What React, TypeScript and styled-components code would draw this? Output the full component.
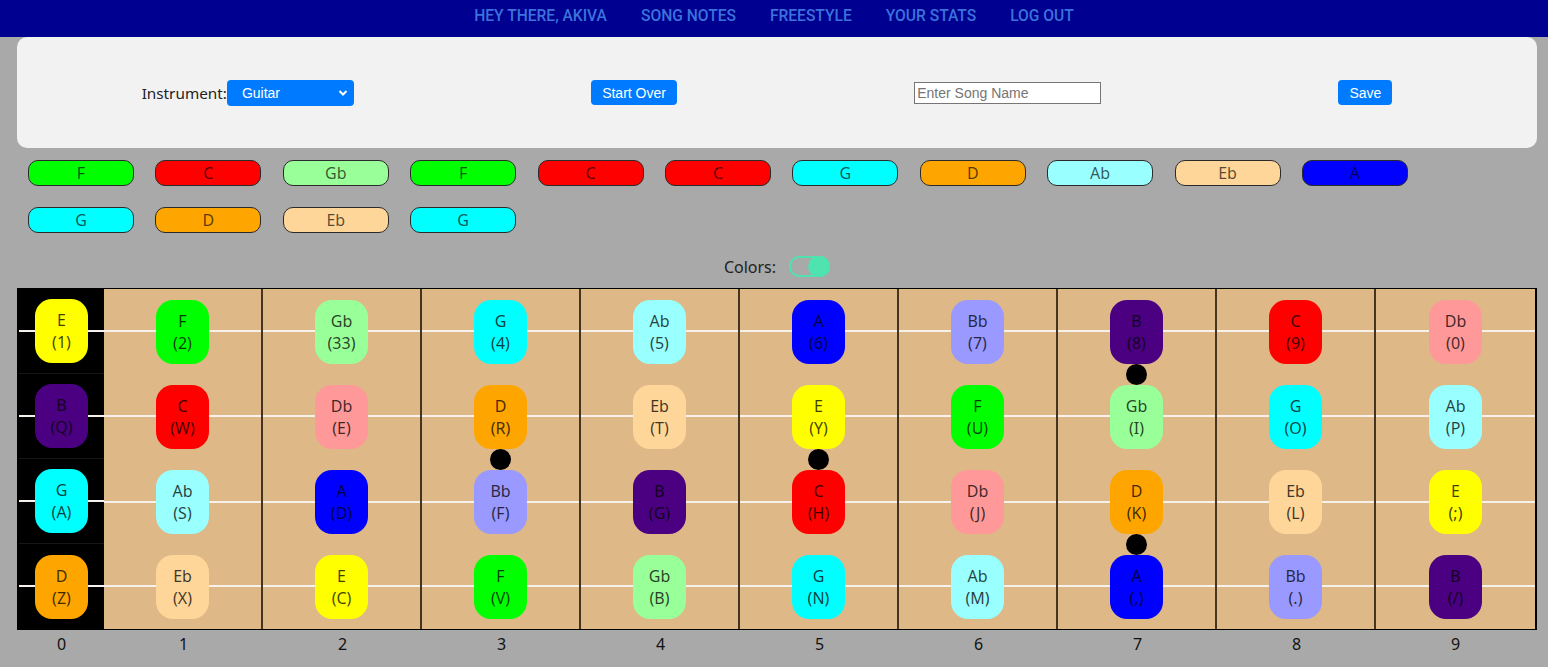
import React from "react";
import styled, { createGlobalStyle } from "styled-components";

const GlobalStyle = createGlobalStyle`
  html, body { margin: 0; padding: 0; }
  body {
    background: #a9a9a9;
    font-family: "Noto Sans", "Open Sans", sans-serif;
    color: #111;
  }
`;

const NOTE_COLORS: Record<string, string> = {
  E: "#ffff00",
  F: "#00ff00",
  Gb: "#99ff99",
  G: "#00ffff",
  Ab: "#99ffff",
  A: "#0000ff",
  Bb: "#9999ff",
  B: "#4b0082",
  C: "#ff0000",
  Db: "#ff9999",
  D: "#ffa500",
  Eb: "#ffd699",
};

const Nav = styled.nav`
  height: 37px;
  background: #000090;
  display: flex;
  justify-content: center;
  align-items: flex-start;
  padding-top: 5px;
  box-sizing: border-box;
`;

const NavLink = styled.a`
  font-family: Roboto, "Liberation Sans", sans-serif;
  font-weight: 500;
  font-size: 15.6px;
  line-height: 22px;
  color: #3b72dc;
  text-transform: uppercase;
  text-decoration: none;
  padding: 0 17px;
`;

const Page = styled.main`
  padding: 0 11px 0 17px;
`;

const Panel = styled.section`
  height: 111px;
  background: #f2f2f2;
  border-radius: 10px;
  display: flex;
  align-items: center;
  justify-content: space-around;
  padding: 0 26px 0 6px;
  box-sizing: border-box;
`;

const Field = styled.div`
  display: flex;
  align-items: center;
`;

const Label = styled.label`
  font-size: 15.3px;
  color: #222;
`;

const SelectWrap = styled.div`
  position: relative;
  display: flex;
`;

const Select = styled.select`
  appearance: none;
  width: 127px;
  height: 26px;
  background: #007bff;
  color: #fff;
  border: none;
  border-radius: 4px;
  font-family: "Liberation Sans", Arial, sans-serif;
  font-size: 14px;
  padding: 0 0 0 15px;
  outline: none;
`;

const Chevron = styled.svg`
  position: absolute;
  right: 6px;
  top: 9px;
  pointer-events: none;
`;

const Button = styled.button`
  height: 25px;
  background: #007bff;
  color: #fff;
  border: none;
  border-radius: 4px;
  font-family: "Liberation Sans", Arial, sans-serif;
  font-size: 14px;
  padding: 0 11px;
`;

const Input = styled.input`
  width: 187px;
  height: 22px;
  box-sizing: border-box;
  border: 1px solid #767676;
  background: #fff;
  font-family: "Liberation Sans", Arial, sans-serif;
  font-size: 14px;
  padding: 0 2px;
  &::placeholder { color: #757575; }
`;

const ChipRow = styled.div`
  display: flex;
  flex-wrap: wrap;
  column-gap: 21.4px;
  row-gap: 21px;
  padding: 12px 11px 11px;
`;

const Chip = styled.div<{ $bg: string }>`
  width: 106px;
  height: 26px;
  box-sizing: border-box;
  border: 1px solid #2a2a2a;
  border-radius: 10px;
  background: ${(p) => p.$bg};
  color: rgba(0, 0, 0, 0.66);
  font-size: 16px;
  line-height: 24px;
  text-align: center;
`;

const ColorsRow = styled.div`
  display: flex;
  justify-content: center;
  align-items: center;
  gap: 13px;
  margin: 12px 0 11px;
  height: 21px;
`;

const ColorsLabel = styled.span`
  font-size: 16px;
  color: #222;
`;

const Toggle = styled.div`
  width: 41px;
  height: 21px;
  box-sizing: border-box;
  border: 2px solid #4fe3b0;
  border-radius: 11px;
  display: flex;
  justify-content: flex-end;
  align-items: center;
`;

const Knob = styled.div`
  width: 22px;
  height: 21px;
  border-radius: 11px;
  background: #4fe3b0;
  margin-right: -2px;
`;

const Board = styled.div`
  display: grid;
  grid-template-columns: 85px repeat(9, 1fr);
  border: 1px solid #000;
  border-left-width: 2px;
  border-right-width: 2px;
  background: #deb887;
`;

const FretCol = styled.div<{ $open?: boolean; $last?: boolean }>`
  position: relative;
  display: flex;
  flex-direction: column;
  background: ${(p) => (p.$open ? "#000" : "#deb887")};
  border-right: ${(p) => (p.$open || p.$last ? "none" : "2px solid #45341f")};
`;

const Cell = styled.div<{ $open?: boolean }>`
  height: 85px;
  box-sizing: border-box;
  display: flex;
  align-items: center;
  justify-content: center;
  border-bottom: ${(p) => (p.$open ? "1px solid #161616" : "none")};
  &:last-child { border-bottom: none; }
  background: linear-gradient(
    to bottom,
    transparent calc(50% - 1px),
    #f6f1ea calc(50% - 1px),
    #f6f1ea calc(50% + 1px),
    transparent calc(50% + 1px)
  );
`;

const Marker = styled.div<{ $bg: string }>`
  width: 53px;
  height: 64px;
  border-radius: 17px;
  background: ${(p) => p.$bg};
  display: flex;
  flex-direction: column;
  align-items: center;
  justify-content: center;
  font-size: 16px;
  line-height: 22px;
  color: rgba(0, 0, 0, 0.75);
`;

const Dot = styled.div`
  position: absolute;
  left: 50%;
  width: 21px;
  height: 21px;
  margin-left: -10.5px;
  margin-top: -10.5px;
  border-radius: 50%;
  background: #000;
`;

const Numbers = styled.div`
  display: grid;
  grid-template-columns: 85px repeat(9, 1fr);
  padding: 2px 2px 0 2px;
`;

const Num = styled.div`
  text-align: center;
  font-size: 16px;
  line-height: 24px;
  color: #111;
`;

const chips = ["F", "C", "Gb", "F", "C", "C", "G", "D", "Ab", "Eb", "A", "G", "D", "Eb", "G"];

const strings: [string, string][][] = [
  [["E", "1"], ["F", "2"], ["Gb", "33"], ["G", "4"], ["Ab", "5"], ["A", "6"], ["Bb", "7"], ["B", "8"], ["C", "9"], ["Db", "0"]],
  [["B", "Q"], ["C", "W"], ["Db", "E"], ["D", "R"], ["Eb", "T"], ["E", "Y"], ["F", "U"], ["Gb", "I"], ["G", "O"], ["Ab", "P"]],
  [["G", "A"], ["Ab", "S"], ["A", "D"], ["Bb", "F"], ["B", "G"], ["C", "H"], ["Db", "J"], ["D", "K"], ["Eb", "L"], ["E", ";"]],
  [["D", "Z"], ["Eb", "X"], ["E", "C"], ["F", "V"], ["Gb", "B"], ["G", "N"], ["Ab", "M"], ["A", ","], ["Bb", "."], ["B", "/"]],
];

const dots: Record<number, number[]> = { 3: [2], 5: [2], 7: [1, 3] };

export default function App() {
  return (
    <>
      <GlobalStyle />
      <Nav>
        {["Hey there, Akiva", "Song Notes", "Freestyle", "Your Stats", "Log Out"].map((t) => (
          <NavLink key={t} href="#">{t}</NavLink>
        ))}
      </Nav>
      <Page>
        <Panel>
          <Field>
            <Label>Instrument:</Label>
            <SelectWrap>
              <Select defaultValue="Guitar">
                <option>Guitar</option>
                <option>Ukulele</option>
                <option>Bass</option>
              </Select>
              <Chevron width="10" height="8" viewBox="0 0 10 8">
                <path d="M1.5 2 L5 5.5 L8.5 2" fill="none" stroke="#fff" strokeWidth="2" />
              </Chevron>
            </SelectWrap>
          </Field>
          <Button>Start Over</Button>
          <Input placeholder="Enter Song Name" />
          <Button>Save</Button>
        </Panel>
        <ChipRow>
          {chips.map((c, i) => (
            <Chip key={i} $bg={NOTE_COLORS[c]}>{c}</Chip>
          ))}
        </ChipRow>
        <ColorsRow>
          <ColorsLabel>Colors:</ColorsLabel>
          <Toggle><Knob /></Toggle>
        </ColorsRow>
        <Board>
          {Array.from({ length: 10 }, (_, f) => (
            <FretCol key={f} $open={f === 0} $last={f === 9}>
              {strings.map((row, s) => (
                <Cell key={s} $open={f === 0}>
                  <Marker $bg={NOTE_COLORS[row[f][0]]}>
                    <span>{row[f][0]}</span>
                    <span>({row[f][1]})</span>
                  </Marker>
                </Cell>
              ))}
              {(dots[f] || []).map((b) => (
                <Dot key={b} style={{ top: b * 85 }} />
              ))}
            </FretCol>
          ))}
        </Board>
        <Numbers>
          {Array.from({ length: 10 }, (_, f) => (
            <Num key={f}>{f}</Num>
          ))}
        </Numbers>
      </Page>
    </>
  );
}
